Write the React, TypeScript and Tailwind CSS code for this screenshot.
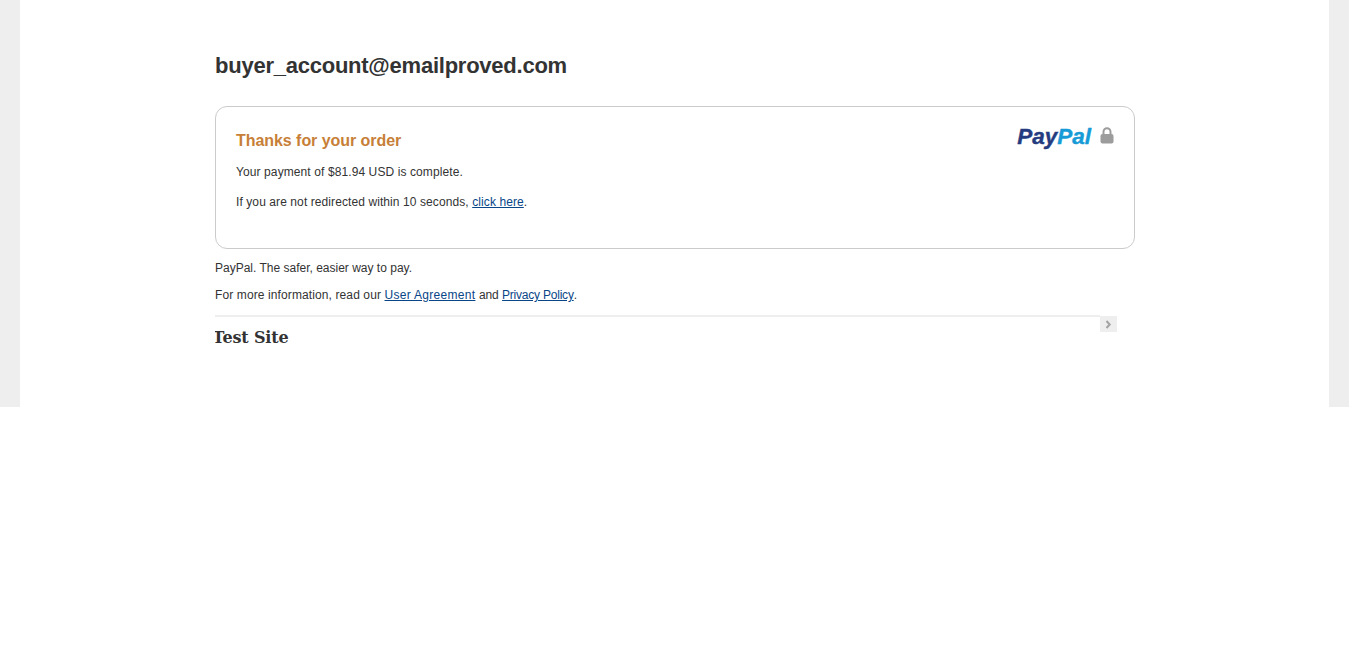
const App = () => {
  return (
    <div className="min-h-[657px] bg-white font-['Liberation_Sans',Arial,sans-serif] text-[#333]">
      <div className="bg-[#eeeeee] px-5">
        <div className="h-[407px] bg-white pl-[195px] pt-[52px]">
          <div className="w-[920px]">
            <h1 className="text-[22px] leading-[27px] font-bold tracking-[-0.24px] text-[#333]">buyer_account@emailproved.com</h1>

            <div className="mt-[27px] flex h-[143px] justify-between rounded-[12px] border border-[#cbcbcb] pl-5 pr-5 pt-[24px]">
              <div>
                <h2 className="text-[16px] leading-[19px] font-bold tracking-[-0.05px] text-[#c77f38]">Thanks for your order</h2>
                <p className="mt-[14px] text-[12px] leading-[16px] tracking-[0.1px]">Your payment of $81.94 USD is complete.</p>
                <p className="mt-[14px] text-[12px] leading-[16px] tracking-[0.09px]">
                  If you are not redirected within 10 seconds,{" "}
                  <a href="#" className="text-[#084688] underline">click here</a>.
                </p>
              </div>
              <div className="mt-[-8px] flex h-[27px] items-center gap-[9px]">
                <span className="text-[22.5px] leading-[24px] font-bold italic [-webkit-text-stroke:0.4px]">
                  <span className="text-[#253b80]">Pay</span>
                  <span className="text-[#179bd7]">Pal</span>
                </span>
                <svg width="14" height="17" viewBox="0 0 14 17" className="mb-[2px]">
                  <path d="M3.5 7V4.8a3.5 3.5 0 0 1 7 0V7" fill="none" stroke="#9c9c9c" strokeWidth="2" />
                  <rect x="0.5" y="7" width="13" height="9.5" rx="2" fill="#9c9c9c" />
                </svg>
              </div>
            </div>

            <p className="mt-[11px] text-[12px] leading-[16px]">PayPal. The safer, easier way to pay.</p>
            <p className="mt-[11px] text-[12px] leading-[16px] tracking-[0.11px]">
              For more information, read our{" "}
              <a href="#" className="tracking-[0.3px] text-[#084688] underline">User Agreement</a>{" "}
              <span className="tracking-[-0.1px]">and</span>{" "}
              <a href="#" className="tracking-[-0.22px] text-[#084688] underline">Privacy Policy</a>.
            </p>

            <div className="mt-[13px] flex w-[902px] items-start">
              <div className="mt-[-1px] h-[2px] flex-1 bg-[#eeeeee]" />
              <div className="flex h-4 w-[17px] items-center justify-center bg-[#eeeeee]">
                <svg width="7" height="9" viewBox="0 0 7 9">
                  <path d="M1.5 1l3.2 3.5L1.5 8" fill="none" stroke="#a3a3a3" strokeWidth="2" />
                </svg>
              </div>
            </div>
            <div className="mt-[-5px] w-[200px] overflow-hidden">
              <div className="ml-[-2.5px] font-['DejaVu_Serif',serif] text-[16px] leading-[22px] font-bold tracking-[-0.15px] text-[#333]">Test Site</div>
            </div>
          </div>
        </div>
      </div>
    </div>
  );
};

export default App;
